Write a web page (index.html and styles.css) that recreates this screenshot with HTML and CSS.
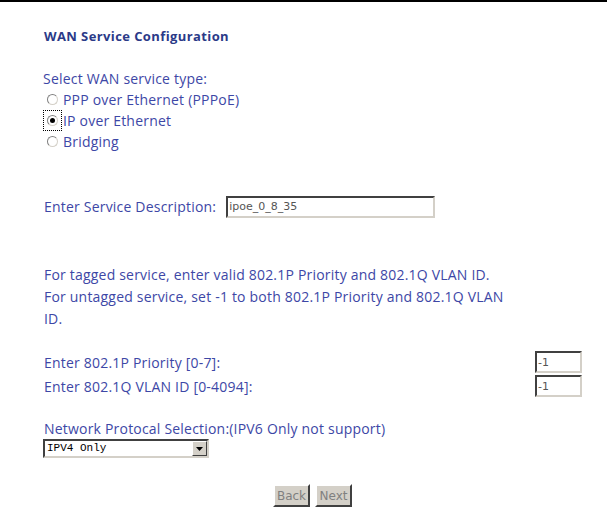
FILE: index.html
```html
<!DOCTYPE html>
<html lang="en">
<head>
  <meta charset="UTF-8" />
  <title>WAN Service Configuration</title>
  <link rel="stylesheet" href="styles.css">
</head>
<body>
  <div class="topline"></div>

  <div class="content">
    <h1 class="title">WAN Service Configuration</h1>

    <div class="service-type">
      <div class="line">Select WAN service type:</div>
      <label class="line radio-row"><span class="focus-box"><input type="radio" name="ntwkPrtcl"></span>PPP over Ethernet (PPPoE)</label>
      <label class="line radio-row"><span class="focus-box focused"><input type="radio" name="ntwkPrtcl" checked></span>IP over Ethernet</label>
      <label class="line radio-row"><span class="focus-box"><input type="radio" name="ntwkPrtcl"></span>Bridging</label>
    </div>

    <div class="desc-row">
      <span>Enter Service Description:</span>
      <input class="text-box desc-box" type="text" value="ipoe_0_8_35">
    </div>

    <p class="note">
      For tagged service, enter valid 802.1P Priority and 802.1Q VLAN ID.<br>
      For untagged service, set -1 to both 802.1P Priority and 802.1Q VLAN ID.
    </p>

    <div class="vlan-table">
      <div class="vlan-row">
        <span>Enter 802.1P Priority [0-7]:</span>
        <input class="text-box small-box" type="text" value="-1">
      </div>
      <div class="vlan-row">
        <span>Enter 802.1Q VLAN ID [0-4094]:</span>
        <input class="text-box small-box" type="text" value="-1">
      </div>
    </div>

    <div class="protocol">
      <div>Network Protocal Selection:(IPV6 Only not support)</div>
      <div class="select-box">
        <span class="select-text">IPV4 Only</span>
        <span class="select-arrow">
          <svg width="7" height="4" viewBox="0 0 7 4"><path d="M0 0h7L3.5 4z" fill="#000"/></svg>
        </span>
      </div>
    </div>

    <div class="buttons">
      <button class="btn" type="button">Back</button>
      <button class="btn" type="button">Next</button>
    </div>
  </div>
</body>
</html>
```

FILE: styles.css
```css
body {
  margin: 0;
  padding: 0;
  background: #ffffff;
  font-family: 'Open Sans', 'Liberation Sans', Arial, sans-serif;
  font-size: 14px;
  letter-spacing: 0.2px;
  color: #3d47a6;
}

.topline {
  height: 2px;
  background: #000000;
}

.content {
  width: 539px;
  padding-left: 43px;
}

.title {
  margin: 25px 0 0 1px;
  font-size: 13px;
  font-weight: bold;
  letter-spacing: 0.4px;
  color: #2b3a88;
  line-height: 18px;
}

.service-type {
  margin-top: 23px;
}

.line {
  display: block;
  line-height: 21px;
  height: 21px;
}

.radio-row {
  display: flex;
  align-items: center;
}

.focus-box {
  display: inline-flex;
  align-items: center;
  justify-content: center;
  width: 19px;
  height: 21px;
  margin-right: 1px;
  box-sizing: border-box;
  border: 1px dotted transparent;
}

.focus-box.focused {
  border-color: #000000;
}

.radio-row input {
  appearance: none;
  -webkit-appearance: none;
  margin: 0;
  width: 11px;
  height: 11px;
  border-radius: 50%;
  border: 1px solid #808080;
  border-right-color: #d4d0c8;
  border-bottom-color: #d4d0c8;
  background: #ffffff;
  box-sizing: border-box;
  position: relative;
}

.radio-row input:checked::after {
  content: "";
  position: absolute;
  left: 2px;
  top: 2px;
  width: 5px;
  height: 5px;
  border-radius: 50%;
  background: #000000;
}

.desc-row {
  display: flex;
  align-items: center;
  margin-top: 43px;
  height: 23px;
}

.desc-row span {
  margin-right: 10px;
  margin-left: 1px;
}

.text-box {
  box-sizing: border-box;
  height: 22px;
  border: 2px solid #d4d0c8;
  border-top-color: #404040;
  border-left-color: #404040;
  font-family: Tahoma, 'DejaVu Sans', sans-serif;
  font-size: 11px;
  letter-spacing: 0;
  color: #555555;
  padding: 0 1px;
  outline: none;
}

.desc-box {
  width: 209px;
}

.note {
  margin: 46px 0 0 1px;
  line-height: 22px;
  width: 466px;
}

.vlan-table {
  margin-top: 20px;
}

.vlan-row {
  display: flex;
  align-items: center;
  justify-content: space-between;
  height: 24px;
  margin-left: 1px;
}

.small-box {
  width: 47px;
}

.protocol {
  margin-top: 21px;
  margin-left: 1px;
  line-height: 20px;
}

.select-box {
  display: flex;
  align-items: center;
  width: 166px;
  height: 19px;
  box-sizing: border-box;
  border: 2px solid #d4d0c8;
  border-top-color: #404040;
  border-left-color: #404040;
  margin-left: -1px;
}

.select-text {
  flex: 1;
  font-family: 'Liberation Mono', 'Courier New', monospace;
  font-size: 11px;
  letter-spacing: 0;
  line-height: 15px;
  padding-left: 2px;
  color: #000000;
}

.select-arrow {
  display: flex;
  align-items: center;
  justify-content: center;
  width: 15px;
  height: 15px;
  box-sizing: border-box;
  background: #d4d0c8;
  border: 1px solid #ffffff;
  border-right-color: #404040;
  border-bottom-color: #404040;
}

.buttons {
  display: flex;
  justify-content: center;
  gap: 5px;
  margin-top: 26px;
}

.btn {
  box-sizing: border-box;
  width: 37px;
  height: 23px;
  padding: 0;
  background: #d4d0c8;
  border: 2px solid #404040;
  border-top-color: #ffffff;
  border-left-color: #ffffff;
  font-family: Tahoma, 'DejaVu Sans', sans-serif;
  font-size: 12px;
  letter-spacing: 0;
  color: #808080;
}
```
